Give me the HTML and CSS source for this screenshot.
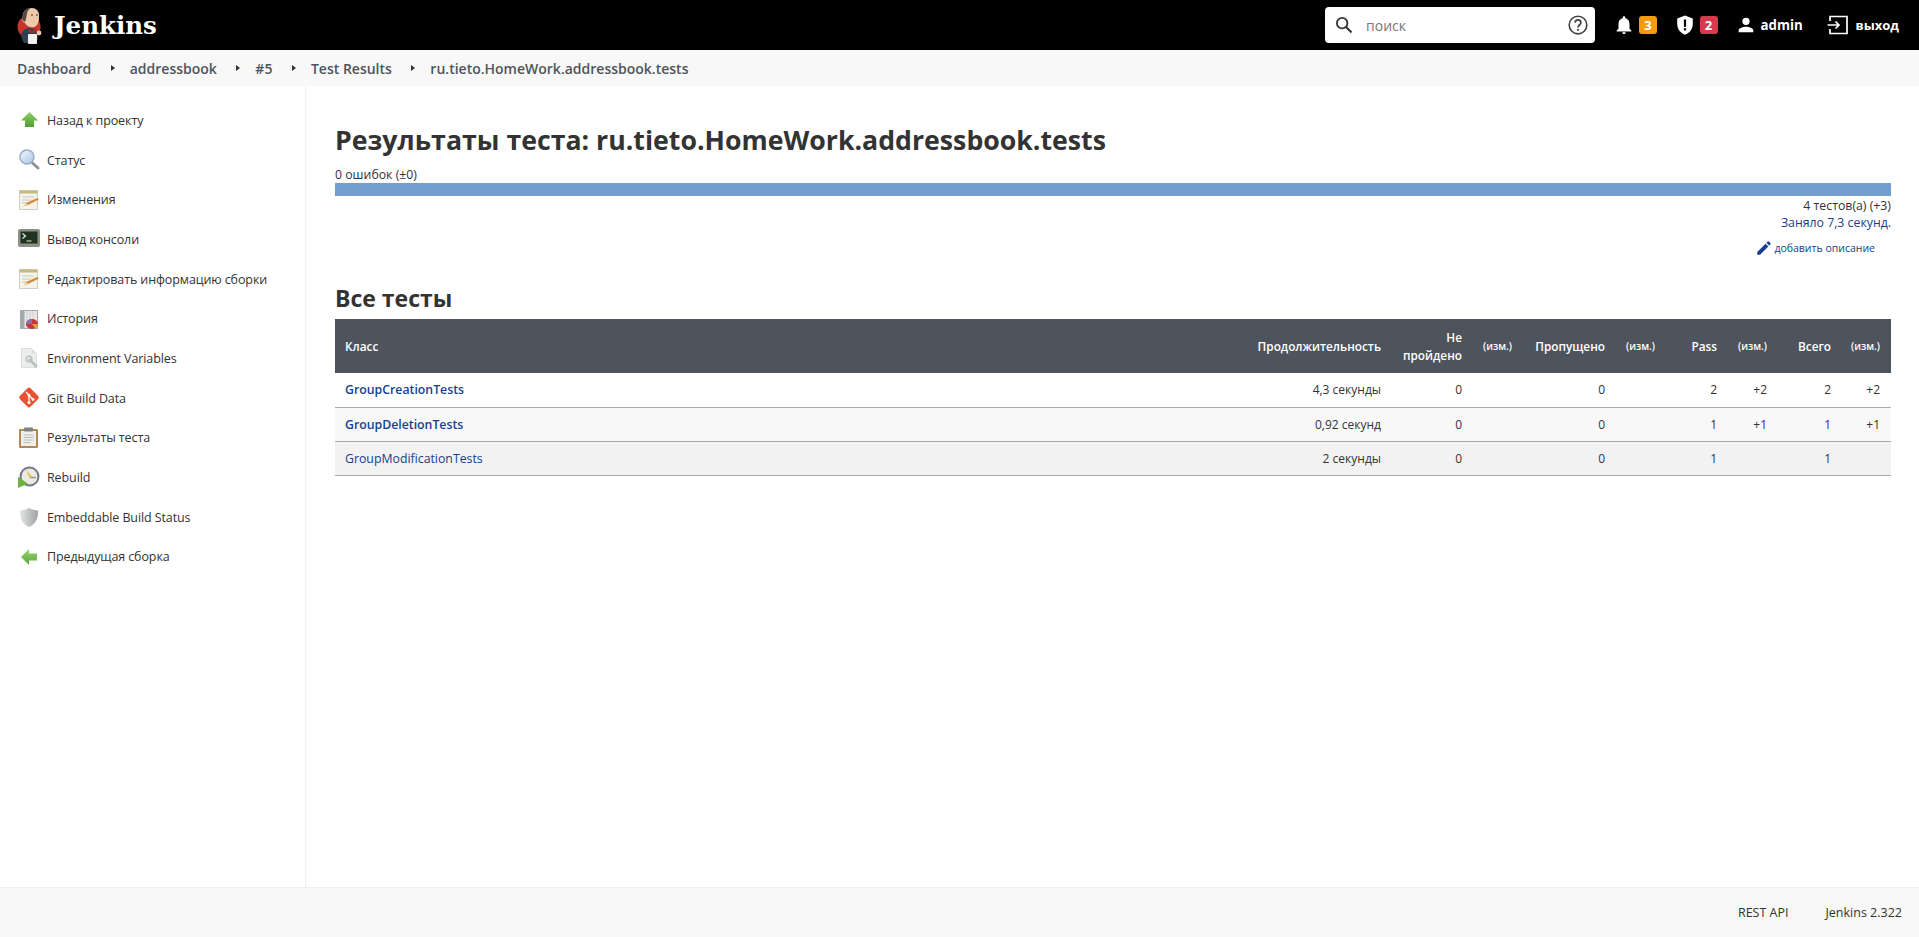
FILE: index.html
```html
<!DOCTYPE html>
<html lang="ru">
<head>
    <meta charset="UTF-8">
    <title>Test Results - Jenkins</title>
    <link rel="stylesheet" href="styles.css">
</head>
<body>
    <header class="page-header">
        <a class="logo" href="#">
            <svg class="logo-mark" viewBox="0 0 28 38" width="28" height="38">
                <circle cx="13" cy="20" r="11.5" fill="#c8352b"/>
                <path d="M5 27c2-4 5-6 8-6l6 1c2 3 3 6 3 9l-2 5H8c-2-3-3-6-3-9z" fill="#2f4151"/>
                <path d="M7 7c1-4 5-6 9-6 4 0 7 3 7 7 0 3 0 6-1 8-1 3-4 5-7 4-3 0-5-2-6-4-1-1-3-1-3-4 0-2 1-3 1-5z" fill="#f0c8aa"/>
                <path d="M7 7c1-4 4-6 8-6-2 1-4 3-4 6l-1 5-1 3c-2-1-3-2-3-4 0-2 1-3 1-4z" fill="#5a4a42"/>
                <path d="M15 8h2M20 8h2" stroke="#3a2a22" stroke-width="1"/>
                <path d="M13 22l3 2 3-2 1 3-4 1-4-1z" fill="#b5272b"/>
                <rect x="12" y="27" width="9" height="10" rx="1" fill="#f3f1ee"/>
                <circle cx="23" cy="26" r="2.4" fill="#f0c8aa"/>
            </svg>
            <span class="logo-text">Jenkins</span>
        </a>
        <div class="header-right">
            <div class="search-box">
                <svg class="search-icon" viewBox="0 0 24 24" width="22" height="22"><circle cx="10" cy="10" r="5.700" fill="none" stroke="#333" stroke-width="2"/><path d="m14.200 14.200 6 6" stroke="#333" stroke-width="2.200"/></svg>
                <span class="search-text">поиск</span>
                <svg class="help-icon" viewBox="0 0 24 24" width="22" height="22"><circle cx="12" cy="12" r="9.600" fill="none" stroke="#444" stroke-width="1.800"/><path d="M8.900 9.600a3.100 3.100 0 0 1 6.200 0c0 2.300-3.100 2.500-3.100 5" fill="none" stroke="#444" stroke-width="1.900"/><circle cx="12" cy="17.300" r="1.200" fill="#444"/></svg>
            </div>
            <div class="header-item bell-item">
                <svg viewBox="0 0 24 24" width="22" height="22"><path d="M12 22a2 2 0 0 0 2-2h-4a2 2 0 0 0 2 2zm6-6v-5c0-3.100-1.600-5.600-4.500-6.300V4a1.500 1.500 0 0 0-3 0v.7C7.600 5.400 6 7.900 6 11v5l-2 2v1h16v-1z" fill="#fff"/></svg>
                <span class="badge badge-warn">3</span>
            </div>
            <div class="header-item shield-item">
                <svg viewBox="0 0 24 24" width="22" height="22"><path d="M12 1.500 3.500 5v6c0 5.300 3.600 10.200 8.500 11.500 4.900-1.300 8.500-6.200 8.500-11.500V5z" fill="#fff"/><rect x="10.800" y="6" width="2.400" height="8" fill="#000"/><rect x="10.800" y="15.500" width="2.400" height="2.400" fill="#000"/></svg>
                <span class="badge badge-danger">2</span>
            </div>
            <a class="header-item user-item" href="#">
                <svg viewBox="0 0 24 24" width="22" height="22"><path d="M12 12a4 4 0 1 0 0-8 4 4 0 0 0 0 8zm0 2c-2.700 0-8 1.300-8 4v2h16v-2c0-2.700-5.300-4-8-4z" fill="#fff"/></svg>
                <span>admin</span>
            </a>
            <a class="header-item logout-item" href="#">
                <svg viewBox="0 0 24 24" width="24" height="24"><path d="M4 8V3.500h17v17H4V16M1.500 12H13M9.500 8.500l3.500 3.500-3.500 3.500" fill="none" stroke="#fff" stroke-width="1.700"/></svg>
                <span>выход</span>
            </a>
        </div>
    </header>

    <nav class="breadcrumbs">
        <a href="#">Dashboard</a>
        <span class="crumb-arrow"></span>
        <a href="#">addressbook</a>
        <span class="crumb-arrow"></span>
        <a href="#">#5</a>
        <span class="crumb-arrow"></span>
        <a href="#">Test Results</a>
        <span class="crumb-arrow"></span>
        <a href="#">ru.tieto.HomeWork.addressbook.tests</a>
    </nav>

    <div class="page-body">
        <aside class="side-panel">
            <a class="task" href="#">
                <svg viewBox="0 0 24 24"><defs><linearGradient id="grad-up" x1="0" y1="0" x2="0" y2="1"><stop offset="0" stop-color="#8fd062"/><stop offset="1" stop-color="#4f9e35"/></linearGradient></defs><path d="M10.500 4 19 12.500h-4V19H6v-6.500H2z" fill="url(#grad-up)"/></svg>
                <span>Назад к проекту</span>
            </a>
            <a class="task" href="#">
                <svg viewBox="0 0 24 24"><defs><linearGradient id="grad-lens" x1="0" y1="0" x2="1" y2="1"><stop offset="0" stop-color="#f2f7fc"/><stop offset="1" stop-color="#a9c6e6"/></linearGradient></defs><path d="m13.500 15 5.500 5" stroke="#8d9298" stroke-width="3" stroke-linecap="round"/><circle cx="8" cy="9" r="7" fill="url(#grad-lens)" stroke="#93aeca" stroke-width="1.500"/></svg>
                <span>Статус</span>
            </a>
            <a class="task" href="#">
                <svg viewBox="0 0 24 24"><rect x="0.500" y="2.500" width="18" height="19" fill="#f4f3ec" stroke="#cfcec5"/><rect x="0.500" y="2.500" width="18" height="3" fill="#c6ba7c"/><path d="M3 9h12M3 12h9M3 15h5" stroke="#c9c9c2"/><path d="m5 18 2-3 11-5 2 1.500-11 5.500z" fill="#d98d3c"/><path d="m5 18 2-3 2 2z" fill="#f1d6a8"/></svg>
                <span>Изменения</span>
            </a>
            <a class="task" href="#">
                <svg viewBox="0 0 24 24"><rect x="-1" y="2" width="22" height="18" rx="2" fill="#8c9186"/><rect x="1.500" y="4.500" width="17" height="12" fill="#1f3320"/><path d="m3.500 6.500 3 2.500-3 2.500M7.500 14h5" stroke="#e6ece0" stroke-width="1.200" fill="none"/></svg>
                <span>Вывод консоли</span>
            </a>
            <a class="task" href="#">
                <svg viewBox="0 0 24 24"><rect x="0.500" y="2.500" width="18" height="19" fill="#f4f3ec" stroke="#cfcec5"/><rect x="0.500" y="2.500" width="18" height="3" fill="#c6ba7c"/><path d="M3 9h12M3 12h9M3 15h5" stroke="#c9c9c2"/><path d="m5 18 2-3 11-5 2 1.500-11 5.500z" fill="#d98d3c"/><path d="m5 18 2-3 2 2z" fill="#f1d6a8"/></svg>
                <span>Редактировать информацию сборки</span>
            </a>
            <a class="task" href="#">
                <svg viewBox="0 0 24 24"><rect x="1.500" y="3.500" width="17" height="18" fill="#e6e6e6" stroke="#a8a8a8"/><rect x="1.500" y="3.500" width="4" height="18" fill="#a4a8ab"/><path d="M8 4v17M11 4v17M14 4v17" stroke="#d2d2d2"/><ellipse cx="13" cy="17" rx="6" ry="5" fill="#c8323a"/><path d="M7 17a6 5 0 0 1 6-5v5z" fill="#8a6fa8"/><path d="M13 17h6a6 5 0 0 1-3 4.300z" fill="#d8a52c"/></svg>
                <span>История</span>
            </a>
            <a class="task" href="#">
                <svg viewBox="0 0 24 24"><path d="M2.500 2.500h10l5 5v14h-15z" fill="#eceded" stroke="#dcdede"/><path d="M12.500 2.500v5h5z" fill="#dcdede"/><path d="m10 13 8 8" stroke="#bcc0c0" stroke-width="2.500"/><circle cx="10" cy="13" r="2.800" fill="none" stroke="#bcc0c0" stroke-width="1.600"/></svg>
                <span>Environment Variables</span>
            </a>
            <a class="task" href="#">
                <svg viewBox="0 0 24 24"><rect x="2.500" y="4" width="15" height="15" rx="2" transform="rotate(45 10 11.500)" fill="#e9502f"/><path d="m7 6 3 3v7M10 9.500l4 4" stroke="#fff" stroke-width="1.300" fill="none"/><circle cx="10" cy="9.500" r="1.400" fill="#fff"/><circle cx="10" cy="16.500" r="1.600" fill="#fff"/><circle cx="14" cy="13.500" r="1.400" fill="#fff"/></svg>
                <span>Git Build Data</span>
            </a>
            <a class="task" href="#">
                <svg viewBox="0 0 24 24"><rect x="0" y="3" width="19" height="19" rx="1" fill="#b08a52"/><rect x="2" y="5" width="15" height="15" fill="#f0efe9"/><rect x="5" y="1.500" width="9" height="4" rx="1" fill="#7d8184"/><path d="M4.500 9h10M4.500 11.500h10M4.500 14h10M4.500 16.500h7" stroke="#bdbdb8"/></svg>
                <span>Результаты теста</span>
            </a>
            <a class="task" href="#">
                <svg viewBox="0 0 24 24"><circle cx="10.500" cy="10.500" r="9" fill="#eceae0" stroke="#74748a" stroke-width="2"/><path d="M7 3.500 12.500 10l-2 2z" fill="#d8c94a"/><path d="M11 11.500h6" stroke="#9a9a9a" stroke-width="1.500"/><path d="M-1 11v11l10-4.500z" fill="#6db33f"/></svg>
                <span>Rebuild</span>
            </a>
            <a class="task" href="#">
                <svg viewBox="0 0 24 24"><defs><linearGradient id="grad-shield" x1="0" y1="0" x2="1" y2="0"><stop offset="0" stop-color="#e4e5e5"/><stop offset="0.500" stop-color="#c2c4c4"/><stop offset="1" stop-color="#9fa1a1"/></linearGradient></defs><path d="M10 3c3 1.500 5.500 2.200 9 2.500.3 7.500-2 13.500-9 16.500C3 19 .7 13 1 5.500 4.500 5.200 7 4.500 10 3z" fill="url(#grad-shield)"/></svg>
                <span>Embeddable Build Status</span>
            </a>
            <a class="task" href="#">
                <svg viewBox="0 0 24 24"><defs><linearGradient id="grad-back" x1="0" y1="0" x2="0" y2="1"><stop offset="0" stop-color="#9ad36c"/><stop offset="1" stop-color="#5aa53c"/></linearGradient></defs><path d="M2 12 10 4v4.500h8v7h-8V20z" fill="url(#grad-back)"/></svg>
                <span>Предыдущая сборка</span>
            </a>
        </aside>

        <main class="main-panel">
            <h1>Результаты теста: ru.tieto.HomeWork.addressbook.tests</h1>
            <div class="fail-count">0 ошибок (±0)</div>
            <div class="result-bar"></div>
            <div class="test-count">4 тестов(а) (+3)</div>
            <div class="took"><a href="#">Заняло 7,3 секунд.</a></div>
            <div class="add-desc">
                <a href="#">
                    <svg viewBox="0 0 24 24" width="18" height="18"><path d="M3 17.300V21h3.700L17.800 9.900l-3.700-3.700zM20.700 7a1 1 0 0 0 0-1.400l-2.300-2.300a1 1 0 0 0-1.400 0l-1.800 1.800 3.700 3.700z" fill="#163f8c"/></svg>
                    <span>добавить описание</span>
                </a>
            </div>

            <h2>Все тесты</h2>
            <table class="test-table">
                <thead>
                    <tr>
                        <th class="col-name">Класс</th>
                        <th class="col-dur">Продолжительность</th>
                        <th class="col-fail">Не пройдено</th>
                        <th class="col-diff small">(изм.)</th>
                        <th class="col-skip">Пропущено</th>
                        <th class="col-diff small">(изм.)</th>
                        <th class="col-pass">Pass</th>
                        <th class="col-diff small">(изм.)</th>
                        <th class="col-total">Всего</th>
                        <th class="col-diff small">(изм.)</th>
                    </tr>
                </thead>
                <tbody>
                    <tr>
                        <td class="name"><a class="changed" href="#">GroupCreationTests</a></td>
                        <td>4,3 секунды</td><td>0</td><td></td><td>0</td><td></td><td>2</td><td>+2</td><td>2</td><td>+2</td>
                    </tr>
                    <tr class="even">
                        <td class="name"><a class="changed" href="#">GroupDeletionTests</a></td>
                        <td>0,92 секунд</td><td>0</td><td></td><td>0</td><td></td><td>1</td><td>+1</td><td>1</td><td>+1</td>
                    </tr>
                    <tr class="odd">
                        <td class="name"><a href="#">GroupModificationTests</a></td>
                        <td>2 секунды</td><td>0</td><td></td><td>0</td><td></td><td>1</td><td></td><td>1</td><td></td>
                    </tr>
                </tbody>
            </table>
        </main>
    </div>

    <footer class="page-footer">
        <a href="#">REST API</a>
        <a href="#">Jenkins 2.322</a>
    </footer>
</body>
</html>
```

FILE: styles.css
```css
* {
    box-sizing: border-box;
}
html, body {
    height: 100%;
}
body {
    margin: 0;
    display: flex;
    flex-direction: column;
    font-family: "Open Sans", "Noto Sans", sans-serif;
    font-size: 13px;
    color: #333;
    background-color: #fff;
    overflow: hidden;
}
a {
    color: inherit;
    text-decoration: none;
}

/* top bar */
.page-header {
    height: 50px;
    flex: none;
    display: flex;
    align-items: center;
    justify-content: space-between;
    background-color: #000;
    color: #fff;
}
.logo {
    display: flex;
    align-items: center;
    margin-left: 16px;
}
.logo-mark {
    margin-top: 2px;
}
.logo-text {
    margin-left: 10px;
    font-family: "DejaVu Serif", serif;
    font-weight: bold;
    font-size: 24.5px;
}
.header-right {
    display: flex;
    align-items: center;
}
.search-box {
    width: 270px;
    height: 36px;
    margin-right: 18px;
    padding: 0 6px 0 8px;
    display: flex;
    align-items: center;
    background-color: #fff;
    border-radius: 4px;
}
.search-text {
    flex: 1;
    margin-left: 11px;
    color: #777;
    font-size: 14px;
}
.header-item {
    display: flex;
    align-items: center;
    font-weight: 700;
    font-size: 13px;
}
.bell-item {
    margin-right: 16.5px;
}
.shield-item {
    margin-right: 17px;
}
.user-item {
    margin-right: 22.7px;
    font-size: 13.3px;
}
.user-item span {
    margin-left: 4px;
}
.logout-item {
    margin-right: 20px;
}
.logout-item span {
    margin-left: 6px;
}
.badge {
    width: 18px;
    height: 18px;
    margin-left: 4px;
    border-radius: 3px;
    font-size: 13px;
    line-height: 18px;
    text-align: center;
}
.badge-warn {
    background-color: #f39c12;
}
.badge-danger {
    background-color: #d33c4c;
}

/* breadcrumb bar */
.breadcrumbs {
    height: 36px;
    flex: none;
    padding-left: 17px;
    display: flex;
    align-items: center;
    background-color: #f8f8f8;
    color: #4d545d;
    font-size: 14px;
    font-weight: 600;
}
.crumb-arrow {
    width: 0;
    height: 0;
    margin: 0 15px 0 19.500px;
    border-left: 4px solid #333;
    border-top: 3.5px solid transparent;
    border-bottom: 3.5px solid transparent;
}

/* page layout */
.page-body {
    flex: 1;
    display: flex;
    min-height: 0;
}
.side-panel {
    width: 306px;
    flex: none;
    padding: 14.500px 0 0 19px;
    border-right: 1px solid #f0f0f0;
}
.task {
    height: 39.7px;
    display: flex;
    align-items: center;
    font-size: 12.5px;
    letter-spacing: -0.1px;
    color: #333;
}
.task svg {
    width: 24px;
    height: 24px;
    flex: none;
    margin-right: 4px;
    overflow: visible;
}
.main-panel {
    flex: 1;
    padding: 35px 28px 0 29px;
}
h1 {
    margin: 0;
    font-size: 26.7px;
    line-height: 38px;
    font-weight: 700;
    color: #333;
}
h2 {
    margin: 25px 0 0;
    font-size: 23px;
    line-height: 33px;
    font-weight: 700;
    color: #333;
}
.fail-count {
    margin-top: 8px;
    line-height: 16px;
    font-size: 12.3px;
}
.result-bar {
    height: 13px;
    background-color: #729fcf;
}
.test-count {
    margin-top: 1px;
    line-height: 17px;
    font-size: 12.3px;
    text-align: right;
}
.took {
    line-height: 17px;
    font-size: 12.3px;
    text-align: right;
}
.took a, .add-desc a {
    color: #163f8c;
}
.add-desc {
    margin-top: 8px;
    padding-right: 16px;
    display: flex;
    justify-content: flex-end;
    font-size: 10.5px;
}
.add-desc a {
    display: flex;
    align-items: center;
}
.add-desc span {
    margin-left: 1px;
}

/* test table */
.test-table {
    width: 100%;
    margin-top: 4px;
    border-collapse: collapse;
    table-layout: fixed;
    font-size: 12px;
}
.test-table th {
    height: 54px;
    padding: 0 10px;
    background-color: #4d545d;
    color: #fff;
    font-size: 11.8px;
    font-weight: 600;
    text-align: right;
    line-height: 18px;
}
.test-table th.col-name {
    text-align: left;
}
.test-table th.small {
    font-size: 10px;
}
.test-table th:last-child, .test-table td:last-child {
    padding-right: 11px;
}
.test-table td {
    height: 34px;
    padding: 0 10px;
    border-bottom: 1px solid #aaa;
    text-align: right;
}
.test-table td.name {
    text-align: left;
    font-size: 12.3px;
}
.test-table td.name a {
    color: #163f8c;
}
.test-table td.name a.changed {
    font-weight: 600;
}
.test-table tr.even td {
    background-color: #f8f8f9;
}
.test-table tr.odd td {
    background-color: #f2f2f3;
}
.col-dur {
    width: 200px;
}
.col-fail {
    width: 81px;
}
.col-diff {
    width: 50px;
}
.col-skip {
    width: 93px;
}
.col-pass {
    width: 62px;
}
.col-total {
    width: 64px;
}

/* footer */
.page-footer {
    height: 50px;
    flex: none;
    padding-right: 17px;
    display: flex;
    align-items: center;
    justify-content: flex-end;
    gap: 37px;
    background-color: #f8f8f8;
    border-top: 1px solid #f0f0f0;
    font-size: 12.5px;
}
```
